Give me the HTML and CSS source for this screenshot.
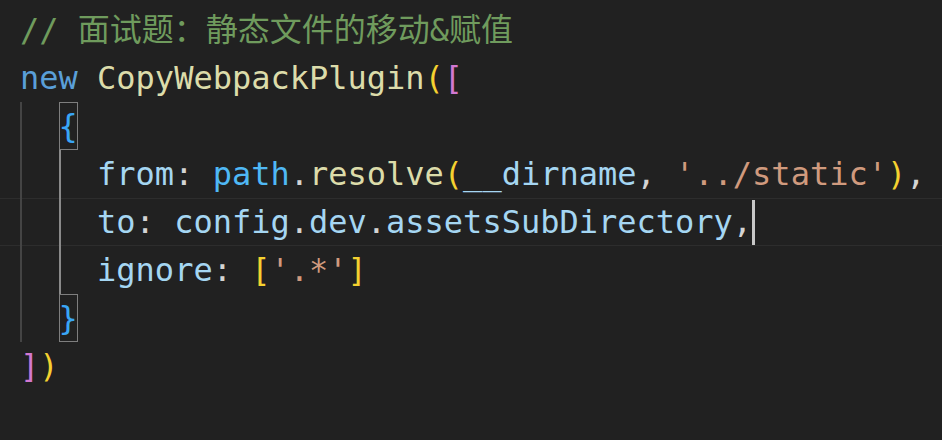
FILE: index.html
```html
<!DOCTYPE html>
<html lang="zh">
<head>
<meta charset="utf-8">
<title>CopyWebpackPlugin</title>
<link rel="stylesheet" href="styles.css">
</head>
<body>
<div class="editor">
  <div class="line"><span class="cm">// 面试题：静态文件的移动&amp;赋值</span></div>
  <div class="line"><span class="kw">new</span><span class="pl"> </span><span class="fn">CopyWebpackPlugin</span><span class="b1">(</span><span class="b2">[</span></div>
  <div class="line"><span class="ind"></span><span class="match b3">{</span></div>
  <div class="line"><span class="ind"></span><span class="ind active"></span><span class="prop">from</span><span class="pl">: </span><span class="var">path</span><span class="pl">.</span><span class="fn">resolve</span><span class="b1">(</span><span class="prop">__dirname</span><span class="pl">, </span><span class="str">'../static'</span><span class="b1">)</span><span class="pl">,</span></div>
  <div class="line current"><span class="ind"></span><span class="ind active"></span><span class="prop">to</span><span class="pl">: </span><span class="prop">config</span><span class="pl">.</span><span class="prop">dev</span><span class="pl">.</span><span class="prop">assetsSubDirectory</span><span class="pl">,</span><span class="cursor"></span></div>
  <div class="line"><span class="ind"></span><span class="ind active"></span><span class="prop">ignore</span><span class="pl">: </span><span class="b1">[</span><span class="str">'.*'</span><span class="b1">]</span></div>
  <div class="line"><span class="ind"></span><span class="match b3">}</span></div>
  <div class="line"><span class="b2">]</span><span class="b1">)</span></div>
</div>
</body>
</html>
```
FILE: styles.css
```css
html, body {
  margin: 0;
  padding: 0;
  background: #212121;
  width: 942px;
  height: 440px;
  overflow: hidden;
}

.editor {
  padding: 6px 0 0 20px;
  font-family: "DejaVu Sans Mono", "Noto Sans CJK SC", monospace;
  font-size: 32px;
  color: #d4d4d4;
}

.line {
  height: 48px;
  line-height: 48px;
  white-space: pre;
  display: flex;
  align-items: stretch;
}

.line > span {
  display: inline-block;
}

.line.current {
  margin-left: -20px;
  padding-left: 20px;
  box-shadow: inset 0 1px 0 #2d2d2d, inset 0 -1px 0 #2d2d2d;
}

.ind {
  width: 2ch;
  box-shadow: inset 2px 0 0 #444444;
}

.ind.active {
  box-shadow: inset 2px 0 0 #8a8a8a;
}

.match {
  box-shadow: inset 0 0 0 1px #7e7e7e;
}

.cursor {
  width: 3px;
  margin: 2px 0 1px 0;
  background: #c8c8c8;
}

.cm { color: #6f9b5d; }
.kw { color: #5a9fd8; }
.fn { color: #dcdcaa; }
.prop { color: #a5d6f2; }
.var { color: #4fb8f5; }
.pl { color: #d4d4d4; }
.str { color: #d09a7e; }
.b1 { color: #f5d130; }
.b2 { color: #d278d2; }
.b3 { color: #3aa6f6; }
```
